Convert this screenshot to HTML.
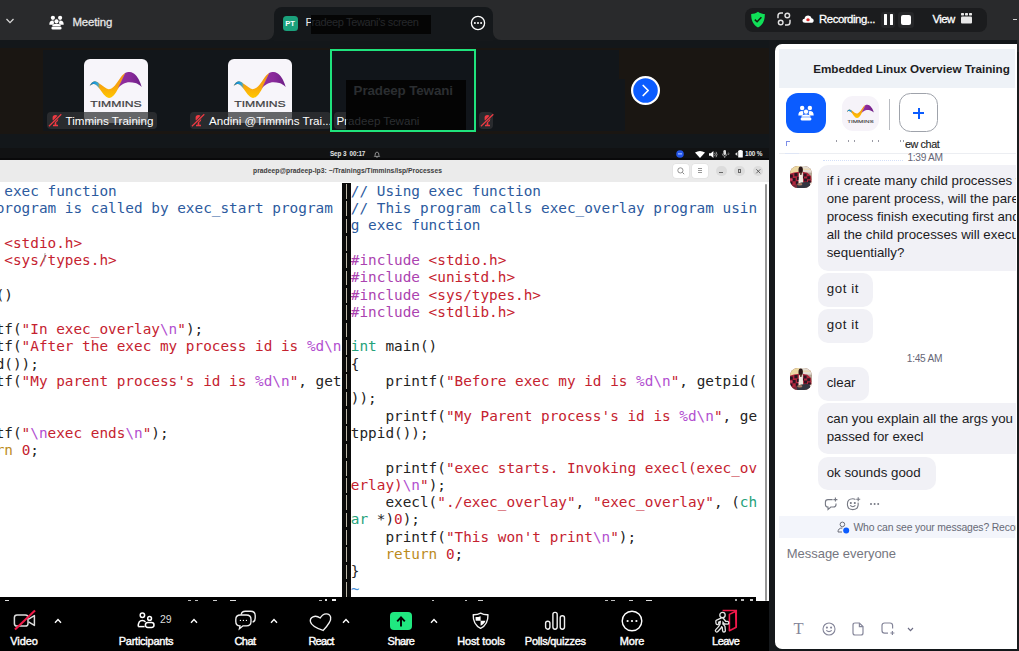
<!DOCTYPE html>
<html><head><meta charset="utf-8"><title>Meeting</title>
<style>
*{box-sizing:border-box;margin:0;padding:0}
html,body{width:1019px;height:651px;overflow:hidden;background:#13171a;font-family:"Liberation Sans",sans-serif}
.abs{position:absolute}
svg{position:absolute;overflow:visible}
#topbar{left:0;top:0;width:1019px;height:40.4px;background:#292a2c}
#tab{left:274px;top:6.7px;width:219px;height:34.3px;background:#15181b;border-radius:8px 8px 0 0}
.tabc{width:8px;height:8px;top:32.4px;background:#15181b}
.tabc i{position:absolute;left:0;top:0;width:8px;height:8px;background:#292a2c;display:block}
#stripL{left:0;top:47.5px;width:768.5px;height:86px;background:#1a1612}
#stripM{left:43.3px;top:49.7px;width:576px;height:81.5px;background:#12161a}
#stripR{left:768.5px;top:40.4px;width:7px;height:611px;background:#15181b}
.logo{background:#f7f5fa;border-radius:6px;width:64px;height:64px;top:59px}
.lbl{top:112px;height:17px;background:rgba(50,51,54,.74);border-radius:4px;color:#fff;font-size:11.6px;line-height:17px;white-space:nowrap;padding-left:19px;overflow:hidden}
#ubar{left:0;top:147.7px;width:768.5px;height:12.5px;background:#111213;border-bottom:2.3px solid #09090a}
#thead{left:0;top:160.2px;width:768.5px;height:21.5px;background:#ebebeb}
#term{left:0;top:181.5px;width:768.5px;height:419.6px;background:#fff;overflow:hidden}
.code{font-family:"DejaVu Sans Mono","Liberation Mono",monospace;font-size:14.37px;line-height:17.29px;white-space:pre;color:#242424}
.c{color:#2c5a9e}.s{color:#c5222f}.p{color:#ab42b0}.e{color:#b24fd0}.t{color:#25a27a}.k{color:#bb8a1c}.b{color:#4a90d9}
#tool{left:0;top:601px;width:768.5px;height:50px;background:#000}
#chat{left:774.5px;top:43.75px;width:242.1px;height:604.75px;background:#fff;border-radius:7px 0 0 7px;overflow:hidden}
#chat>.in{position:absolute;left:.5px;top:.25px;width:240.6px;height:604.5px;overflow:hidden}
.tl{color:#fff;font-size:11px;-webkit-text-stroke:.4px #fff;letter-spacing:-.12px;text-align:center;width:90px;top:635px;line-height:13px;white-space:nowrap}
.bub{background:#f1f1f6;border-radius:10px;font-size:13.3px;color:#1c1c1e;line-height:18.1px;white-space:nowrap;padding:7px 0 0 8.5px;left:43.2px}
.ts{font-size:10.2px;color:#666676;white-space:nowrap;letter-spacing:-.28px}
.av{left:14.9px;width:22px;height:22px;border-radius:8px;overflow:hidden;background:#8a5a48}
</style></head><body>

<div id="topbar" class="abs"></div>
<div id="tab" class="abs"></div>
<div class="abs tabc" style="left:266px"><i style="border-radius:0 0 8px 0"></i></div>
<div class="abs tabc" style="left:493px"><i style="border-radius:0 0 0 8px"></i></div>
<svg style="left:5px;top:17px" width="10" height="8" viewBox="0 0 10 8"><path d="M1.5 2 L5 5.6 L8.5 2" fill="none" stroke="#d8d8d8" stroke-width="1.3"/></svg>
<svg style="left:49.2px;top:14.7px" width="15" height="15" viewBox="0 0 15 15" fill="#fff"><circle cx="3.9" cy="2.8" r="2.1"/><circle cx="11.1" cy="2.8" r="2.1"/><path d="M.3 9.8 Q.3 5.6 3.9 5.6 Q5.2 5.6 5.8 6.2 L4.2 9.8Z"/><path d="M14.7 9.8 Q14.7 5.6 11.1 5.6 Q9.8 5.6 9.2 6.2 L10.8 9.8Z"/><circle cx="7.5" cy="6.3" r="2.5" stroke="#292a2c" stroke-width=".8"/><path d="M3.2 11 Q3.4 8.8 7.5 8.8 Q11.6 8.8 11.8 11Z"/><rect x="2.4" y="11.5" width="10.2" height="3.1" rx="1.55"/></svg>
<div class="abs" style="left:72.5px;top:15.4px;color:#e6e6e6;font-size:11.4px;line-height:14px;-webkit-text-stroke:.3px #e6e6e6;letter-spacing:-.12px">Meeting</div>
<div class="abs" style="left:282.5px;top:15.5px;width:15px;height:15px;border-radius:3.5px;background:#1ba17c;color:#fff;font-size:7.6px;font-weight:bold;line-height:15px;text-align:center;letter-spacing:-.2px">PT</div>
<div class="abs" style="left:305.5px;top:15px;color:#e8e8e8;font-size:11.4px;line-height:14px;white-space:nowrap">P</div>
<div class="abs" style="left:311px;top:15px;width:119.5px;height:19px;background:#050505;color:#25282b;font-size:11px;line-height:14px;white-space:nowrap;padding-left:.5px;letter-spacing:-.36px">radeep Tewani's screen</div>
<svg style="left:470px;top:15px" width="16" height="16" viewBox="0 0 16 16"><circle cx="8" cy="8" r="6.6" fill="none" stroke="#fff" stroke-width="1.3"/><circle cx="4.9" cy="8" r="1" fill="#fff"/><circle cx="8" cy="8" r="1" fill="#fff"/><circle cx="11.1" cy="8" r="1" fill="#fff"/></svg>
<div class="abs" style="left:745px;top:8px;width:242px;height:24px;border-radius:8px;background:#1b1c1e"></div>
<svg style="left:750px;top:11px" width="16" height="17" viewBox="0 0 16 17"><path d="M8 .8 C10 2.300000000000000 12.5 3 14.8 3 C15 9 13 14 8 16.400000000000002 C3 14 1 9 1.2 3 C3.5 3 6 2.3 8 .8Z" fill="#10e058"/><path d="M4.8 8.6 L7.1 10.8 L11.4 6.3" fill="none" stroke="#10210f" stroke-width="1.5"/></svg>
<svg style="left:777px;top:12.3px" width="14" height="14" viewBox="0 0 14 14" fill="none" stroke="#e2e2e2" stroke-width="1.45"><path d="M1 6.2 V3.8 Q1 1 3.8 1 H6"/><path d="M13 7.8 V10.2 Q13 13 10.2 13 H8"/><circle cx="10.3" cy="3.5" r="2.3"/><circle cx="3.7" cy="10.5" r="2.3"/></svg>
<svg style="left:802px;top:15px" width="12" height="8.2" viewBox="0 0 12 9" preserveAspectRatio="none"><path d="M3 8.6 Q.4 8.6 .4 6.3 Q.4 4.300000000000001 2.5 4.1 Q3 .6 6.2 .6 Q9 .6 9.6 3.5 Q11.700000000000001 3.8 11.7 6 Q11.7 8.6 9 8.6Z" fill="#fff"/><circle cx="6" cy="5.300000000000001" r="1.7" fill="#e02828"/></svg>
<div class="abs" style="left:819px;top:12px;color:#fff;font-size:11.4px;line-height:14px;-webkit-text-stroke:.3px #fff;letter-spacing:-.46px;white-space:nowrap">Recording...</div>
<div class="abs" style="left:881px;top:12.2px;width:14px;height:15.4px;border-radius:3px;background:#262729"></div><div class="abs" style="left:897.6px;top:12.2px;width:16.4px;height:15.4px;border-radius:3px;background:#262729"></div>
<div class="abs" style="left:884px;top:14px;width:3px;height:11px;background:#fff;border-radius:.5px"></div>
<div class="abs" style="left:889.5px;top:14px;width:3px;height:11px;background:#fff;border-radius:.5px"></div>
<div class="abs" style="left:901px;top:14.5px;width:10px;height:10px;background:#fff;border-radius:2px"></div>
<div class="abs" style="left:932.5px;top:12px;color:#fff;font-size:11.4px;line-height:14px;-webkit-text-stroke:.3px #fff;letter-spacing:-.6px">View</div>
<svg style="left:961px;top:13px" width="11" height="11" viewBox="0 0 11 11" fill="#e8e8e8"><rect x="0" y="0" width="3" height="2.400000000000000" rx=".6"/><rect x="4" y="0" width="3" height="2.4" rx=".6"/><rect x="8" y="0" width="3" height="2.4" rx=".6"/><rect x="0" y="3.4" width="11" height="7.2" rx="1"/></svg>
<div class="abs" style="left:1013px;top:18.5px;width:4px;height:1.4px;background:#ccc"></div>

<div id="stripL" class="abs"></div><div id="stripM" class="abs"></div><div id="stripR" class="abs"></div>
<div class="abs" style="left:43.3px;top:79px;width:581.7px;height:52.2px;background:#12161a"></div>
<div class="abs logo" style="left:84px"></div><svg style="left:84px;top:59px" width="64" height="64" viewBox="0 0 64 64">
<defs><linearGradient id="g1o" x1="0" y1="0" x2="0" y2="1"><stop offset="0" stop-color="#f39016"/><stop offset=".55" stop-color="#f8a60c"/><stop offset="1" stop-color="#ffc800"/></linearGradient>
<linearGradient id="g1p" x1="0" x2="1"><stop offset="0" stop-color="#93309f"/><stop offset=".5" stop-color="#8a2a9b"/><stop offset="1" stop-color="#6c1f86"/></linearGradient>
<linearGradient id="g1b" x1="0" x2="1"><stop offset="0" stop-color="#0f6fb8"/><stop offset=".5" stop-color="#1f9edc"/><stop offset=".74" stop-color="#2fa6dc" stop-opacity=".9"/><stop offset=".92" stop-color="#6aa8a0" stop-opacity="0"/><stop offset="1" stop-color="#f59b14" stop-opacity="0"/></linearGradient></defs>
<path d="M5.6 27.2 C6.8 24.2 8.8 22 11 22.2 C15 23 19 28.3 24.6 30.3 C29 30.3 33 24 36.6 18.6 C38.5 16 40 14.6 41.6 13.8 L34.2 29.4 C31.5 34.5 28.5 38.9 25 38.9 C21 38.9 18 32.5 14.4 28.3 C13 26.6 11.5 25.2 9.8 25 C8 24.9 6.8 25.9 5.6 27.2Z" fill="url(#g1o)"/>
<path d="M5.6 27.2 C6.8 24.2 8.8 22 11 22.2 C13 22.6 15 24 17 26 L17 31.4 C16 30.2 15.2 29.2 14.4 28.3 C13 26.6 11.5 25.2 9.8 25 C8 24.9 6.8 25.9 5.6 27.2Z" fill="url(#g1b)"/>
<path d="M41.2 14 C43 13 44.5 12.9 45.8 13.05 C48 13.3 50 14.5 51.3 15.8 C53 17.6 54.3 19.5 55 20.9 C56.2 23.2 57 25.5 57.7 28 C55.5 26 53.5 24.8 51.3 24.1 C49 23.3 46.5 23 43.9 23.2 C41.5 23.6 39.5 24.6 37.5 26 C36 27 35 28 33.8 29.6Z" fill="url(#g1p)"/>
<text x="32" y="47.7" text-anchor="middle" font-family="Liberation Sans,sans-serif" font-size="8.4" fill="#3e3e41" textLength="51.4" lengthAdjust="spacingAndGlyphs" stroke="#3e3e41" stroke-width=".2">TIMMINS</text></svg>
<div class="abs logo" style="left:228px"></div><svg style="left:228px;top:59px" width="64" height="64" viewBox="0 0 64 64">
<defs><linearGradient id="g2o" x1="0" y1="0" x2="0" y2="1"><stop offset="0" stop-color="#f39016"/><stop offset=".55" stop-color="#f8a60c"/><stop offset="1" stop-color="#ffc800"/></linearGradient>
<linearGradient id="g2p" x1="0" x2="1"><stop offset="0" stop-color="#93309f"/><stop offset=".5" stop-color="#8a2a9b"/><stop offset="1" stop-color="#6c1f86"/></linearGradient>
<linearGradient id="g2b" x1="0" x2="1"><stop offset="0" stop-color="#0f6fb8"/><stop offset=".5" stop-color="#1f9edc"/><stop offset=".74" stop-color="#2fa6dc" stop-opacity=".9"/><stop offset=".92" stop-color="#6aa8a0" stop-opacity="0"/><stop offset="1" stop-color="#f59b14" stop-opacity="0"/></linearGradient></defs>
<path d="M5.6 27.2 C6.8 24.2 8.8 22 11 22.2 C15 23 19 28.3 24.6 30.3 C29 30.3 33 24 36.6 18.6 C38.5 16 40 14.6 41.6 13.8 L34.2 29.4 C31.5 34.5 28.5 38.9 25 38.9 C21 38.9 18 32.5 14.4 28.3 C13 26.6 11.5 25.2 9.8 25 C8 24.9 6.8 25.9 5.6 27.2Z" fill="url(#g2o)"/>
<path d="M5.6 27.2 C6.8 24.2 8.8 22 11 22.2 C13 22.6 15 24 17 26 L17 31.4 C16 30.2 15.2 29.2 14.4 28.3 C13 26.6 11.5 25.2 9.8 25 C8 24.9 6.8 25.9 5.6 27.2Z" fill="url(#g2b)"/>
<path d="M41.2 14 C43 13 44.5 12.9 45.8 13.05 C48 13.3 50 14.5 51.3 15.8 C53 17.6 54.3 19.5 55 20.9 C56.2 23.2 57 25.5 57.7 28 C55.5 26 53.5 24.8 51.3 24.1 C49 23.3 46.5 23 43.9 23.2 C41.5 23.6 39.5 24.6 37.5 26 C36 27 35 28 33.8 29.6Z" fill="url(#g2p)"/>
<text x="32" y="47.7" text-anchor="middle" font-family="Liberation Sans,sans-serif" font-size="8.4" fill="#3e3e41" textLength="51.4" lengthAdjust="spacingAndGlyphs" stroke="#3e3e41" stroke-width=".2">TIMMINS</text></svg>
<div class="abs lbl" style="left:46.5px;width:110.5px">Timmins Training</div><svg style="left:47.5px;top:114px" width="14" height="13" viewBox="0 0 14 13"><path d="M4.6 3.6 Q4.6 1 7.4 1 Q10.2 1 10.2 3.6 V5.4 Q10.2 7.8 8.3 8 V10.8 H10 V12.2 H5 V10.8 H6.600000000000001 V8 Q4.6 7.800000000000001 4.6 5.4Z" fill="#ee3a43"/><path d="M12.9 .2 L1.2 12.300000000000001" stroke="#2a2c2e" stroke-width="2.6"/><path d="M13.3 .2 L.9 12.2" stroke="#ee3a43" stroke-width="1.2"/></svg>
<div class="abs lbl" style="left:190px;width:141px">Andini @Timmins Trai...</div><svg style="left:191px;top:114px" width="14" height="13" viewBox="0 0 14 13"><path d="M4.6 3.6 Q4.6 1 7.4 1 Q10.2 1 10.2 3.6 V5.4 Q10.2 7.8 8.3 8 V10.8 H10 V12.2 H5 V10.8 H6.600000000000001 V8 Q4.6 7.800000000000001 4.6 5.4Z" fill="#ee3a43"/><path d="M12.9 .2 L1.2 12.300000000000001" stroke="#2a2c2e" stroke-width="2.6"/><path d="M13.3 .2 L.9 12.2" stroke="#ee3a43" stroke-width="1.2"/></svg>
<div class="abs" style="left:330px;top:49px;width:145.8px;height:82.6px;background:#11151a;border:2px solid #1fe27d"></div>
<div class="abs lbl" style="left:334px;width:88px;padding-left:2.5px">Pradeep Tewani</div>
<div class="abs" style="left:346.2px;top:80px;width:119.5px;height:50px;background:#040404"></div>
<div class="abs" style="left:343.5px;top:83px;width:119.5px;text-align:center;color:#2b2e31;font-weight:bold;font-size:13.4px;line-height:16px;white-space:nowrap;letter-spacing:-.12px">Pradeep Tewani</div>
<div class="abs" style="left:346.4px;top:112px;color:#2c2f32;font-size:11.6px;line-height:17px;white-space:nowrap;width:80px;overflow:hidden;text-indent:-9.9px">Pradeep Tewani</div>
<div class="abs lbl" style="left:479px;width:13.5px;padding:0"></div><svg style="left:479.5px;top:114px" width="14" height="13" viewBox="0 0 14 13"><path d="M4.6 3.6 Q4.6 1 7.4 1 Q10.2 1 10.2 3.6 V5.4 Q10.2 7.8 8.3 8 V10.8 H10 V12.2 H5 V10.8 H6.600000000000001 V8 Q4.6 7.800000000000001 4.6 5.4Z" fill="#ee3a43"/><path d="M12.9 .2 L1.2 12.300000000000001" stroke="#2a2c2e" stroke-width="2.6"/><path d="M13.3 .2 L.9 12.2" stroke="#ee3a43" stroke-width="1.2"/></svg>
<svg style="left:631px;top:76px" width="29" height="29" viewBox="0 0 29 29"><circle cx="14.5" cy="14.5" r="13.4" fill="#0b5cff" stroke="#fff" stroke-width="2.2"/><path d="M12.2 9.5 L17.2 14.5 L12.2 19.5" fill="none" stroke="#fff" stroke-width="1.7" stroke-linecap="round" stroke-linejoin="round"/></svg>

<div id="ubar" class="abs"></div>
<div class="abs" style="left:330px;top:150.2px;color:#e4e4e4;font-size:6.3px;line-height:8px;font-weight:bold;white-space:nowrap;letter-spacing:-.1px">Sep 3&nbsp; 00:17</div>
<svg style="left:374.3px;top:150.7px" width="6" height="7" viewBox="0 0 6 7"><path d="M1 4.6 Q1 1 3 1 Q5 1 5 4.6 L5.6 5.4 H.4Z M2.3 6.2 H3.7" fill="none" stroke="#aaa" stroke-width=".8"/></svg>
<svg style="left:676px;top:150px" width="8" height="8" viewBox="0 0 8 8"><circle cx="4" cy="4" r="3.8" fill="#2456e8"/><rect x="2" y="3.2" width="4" height="1.3" fill="#9ab4ff"/></svg>
<svg style="left:695px;top:150.5px" width="10" height="7" viewBox="0 0 10 7"><path d="M0 1.6 Q5 -1.4 10 1.6 L5 7Z" fill="#fff"/></svg>
<svg style="left:709px;top:150.5px" width="9" height="7" viewBox="0 0 9 7"><path d="M0 2.300000000000000 H1.8 L4.4 0 V7 L1.8 4.7 H0Z" fill="#fff"/><path d="M5.6 1.8 Q7 3.5 5.6 5.2 M7 .8 Q9 3.5 7 6.2" fill="none" stroke="#bbb" stroke-width=".8"/></svg>
<svg style="left:722px;top:150px" width="9" height="8" viewBox="0 0 9 8"><rect x="1.4" y="0" width="2.6" height="5" rx="1.3" fill="#ddd"/><path d="M.3 3.6 Q.3 6.2 2.7 6.2 Q5.1 6.2 5.1 3.6 M2.7 6.2 V8" fill="none" stroke="#bbb" stroke-width=".7"/><path d="M6.4 2.6 Q7.4 3.8 6.4 5" fill="none" stroke="#999" stroke-width=".8"/></svg>
<svg style="left:735px;top:150px" width="9" height="8" viewBox="0 0 9 8"><path d="M0 4 L2.400000000000000 2 V6Z" fill="#ddd"/><rect x="3.2" y=".6" width="4.6" height="7" rx=".6" fill="#fff"/><rect x="4.4" y="0" width="2.2" height="1" fill="#fff"/></svg>
<div class="abs" style="left:745px;top:150.3px;color:#e4e4e4;font-size:6.4px;line-height:8px;font-weight:bold;white-space:nowrap;letter-spacing:-.15px">100 %</div>
<div id="thead" class="abs"></div>
<div class="abs" style="left:247.5px;top:166.7px;width:200px;text-align:center;color:#3c3c3c;font-size:6.75px;line-height:8px;font-weight:bold;white-space:nowrap;letter-spacing:.02px">pradeep@pradeep-lp3: ~/Trainings/Timmins/lsp/Processes</div>
<div class="abs" style="left:673px;top:163.5px;width:15.5px;height:14.5px;background:#fff;border-radius:3px;box-shadow:0 0 0 .5px #ddd"></div>
<svg style="left:677px;top:167px" width="8" height="8" viewBox="0 0 8 8"><circle cx="3.4" cy="3.4" r="2.6" fill="none" stroke="#777" stroke-width=".8"/><path d="M5.4 5.4 L7.2 7.2" stroke="#777" stroke-width=".9"/></svg>
<div class="abs" style="left:692px;top:163.5px;width:15.5px;height:14.5px;background:#fff;border-radius:3px;box-shadow:0 0 0 .5px #ddd"></div>
<div class="abs" style="left:697.5px;top:168px;width:4.5px;height:5px;border-top:1px solid #999;border-bottom:1px solid #999"><i style="display:block;margin-top:1px;height:1px;background:#999"></i></div>
<div class="abs" style="left:716px;top:165.8px;width:10.6px;height:10.6px;border-radius:6px;background:#dcdcdc"></div>
<div class="abs" style="left:719.2px;top:171.6px;width:4px;height:.9px;background:#666"></div>
<div class="abs" style="left:734.3px;top:165.8px;width:10.6px;height:10.6px;border-radius:6px;background:#dcdcdc"></div>
<div class="abs" style="left:737.8px;top:169.3px;width:3.6px;height:3.8px;border:.8px solid #666"></div>
<div class="abs" style="left:752.6px;top:165.8px;width:10.6px;height:10.6px;border-radius:6px;background:#dcdcdc"></div>
<svg style="left:755.6px;top:168.8px" width="4.6" height="4.6" viewBox="0 0 4.6 4.6"><path d="M.3 .3 L4.3 4.3 M4.3 .3 L.3 4.3" stroke="#555" stroke-width=".9"/></svg>
<div id="term" class="abs">
<div class="abs code" style="left:-73.5px;top:1.3px;width:415.7px;overflow:hidden"><span class="c">// Using exec function</span>
<span class="c">// This program is called by exec_start program</span>

<span class="p">#include </span><span class="s">&lt;stdio.h&gt;</span>
<span class="p">#include </span><span class="s">&lt;sys/types.h&gt;</span>

<span class="t">int</span> main()
{
    printf(<span class="s">"In exec_overlay</span><span class="e">\n</span><span class="s">"</span>);
    printf(<span class="s">"After the exec my process id is </span><span class="e">%d\n</span>
<span class="s">"</span>, getpid());
    printf(<span class="s">"My parent process's id is </span><span class="e">%d\n</span><span class="s">"</span>, get
ppid());

    printf(<span class="s">"</span><span class="e">\n</span><span class="s">exec ends</span><span class="e">\n</span><span class="s">"</span>);
    <span class="k">return</span> <span class="s">0</span>;
}
<span class="b">~</span></div>
<div class="abs code" style="left:350.8px;top:1.3px"><span class="c">// Using exec function</span>
<span class="c">// This program calls exec_overlay program usin</span>
<span class="c">g exec function</span>

<span class="p">#include </span><span class="s">&lt;stdio.h&gt;</span>
<span class="p">#include </span><span class="s">&lt;unistd.h&gt;</span>
<span class="p">#include </span><span class="s">&lt;sys/types.h&gt;</span>
<span class="p">#include </span><span class="s">&lt;stdlib.h&gt;</span>

<span class="t">int</span> main()
{
    printf(<span class="s">"Before exec my id is </span><span class="e">%d\n</span><span class="s">"</span>, getpid(
));
    printf(<span class="s">"My Parent process's id is </span><span class="e">%d\n</span><span class="s">"</span>, ge
tppid());

    printf(<span class="s">"exec starts. Invoking execl(exec_ov</span>
<span class="s">erlay)</span><span class="e">\n</span><span class="s">"</span>);
    execl(<span class="s">"./exec_overlay"</span>, <span class="s">"exec_overlay"</span>, (<span class="t">ch</span>
<span class="t">ar</span> *)<span class="s">0</span>);
    printf(<span class="s">"This won't print</span><span class="e">\n</span><span class="s">"</span>);
    <span class="k">return</span> <span class="s">0</span>;
}
<span class="b">~</span></div>

<div class="abs" style="left:342.2px;top:1px;width:8.6px;height:416px;background:#0a0a0a"></div>
<div class="abs" style="left:345.6px;top:1.3px;width:1.9px;height:414px;background:repeating-linear-gradient(to bottom,#0a0a0a 0,#0a0a0a 1.2px,#bdb7a8 1.2px,#bdb7a8 15.9px,#0a0a0a 15.9px,#0a0a0a 17.29px)"></div>
<div class="abs" style="left:0;top:415.2px;width:756.4px;height:5px;background:#000"></div>
<div class="abs" style="left:44.2px;top:71.6px;width:1.3px;height:8.6px;background:#8a8a8a;opacity:.75;transform:skewX(-8deg)"></div>
<div class="abs" style="left:764.7px;top:2px;width:2.4px;height:417.6px;background:#969696;border-radius:1px"></div>
</div>

<div id="tool" class="abs"></div>
<div class="abs" style="left:5px;top:599.6px;width:4px;height:1.3px;background:#ddd"></div>
<div class="abs" style="left:188px;top:599.6px;width:3px;height:1.5px;background:#bbb"></div><div class="abs" style="left:195px;top:599.6px;width:3px;height:1.5px;background:#bbb"></div>
<div class="abs" style="left:213px;top:599.6px;width:4px;height:1.3px;background:#ccc"></div><div class="abs" style="left:230px;top:599.6px;width:6px;height:1.5px;background:#ddd"></div>
<div class="abs" style="left:319px;top:599.6px;width:3px;height:1.5px;background:#bbb"></div><div class="abs" style="left:325px;top:599.4px;width:2.2px;height:1.7px;background:#ddd"></div><div class="abs" style="left:331.5px;top:599.4px;width:4.5px;height:1.7px;background:#eee"></div>
<div class="abs" style="left:432px;top:600px;width:2px;height:1.2px;background:#bbb"></div><div class="abs" style="left:465px;top:599.6px;width:2px;height:1.5px;background:#bbb"></div><div class="abs" style="left:478px;top:599.6px;width:5px;height:1.5px;background:#ccc"></div>
<div class="abs" style="left:605px;top:599.6px;width:3px;height:1.5px;background:#bbb"></div><div class="abs" style="left:611px;top:599.6px;width:4px;height:1.5px;background:#bbb"></div><div class="abs" style="left:629px;top:599.6px;width:4px;height:1.4px;background:#ccc"></div><div class="abs" style="left:646px;top:599.6px;width:6px;height:1.5px;background:#ddd"></div>
<div class="abs" style="left:734.5px;top:599.4px;width:2.5px;height:1.6px;background:#aaa"></div><div class="abs" style="left:741.3px;top:599.4px;width:3px;height:1.6px;background:#bbb"></div><div class="abs" style="left:750px;top:599.4px;width:3.4px;height:1.6px;background:#ccc"></div>
<svg style="left:13px;top:609px" width="24" height="22" viewBox="0 0 24 22"><rect x="1.4" y="6" width="13.6" height="11" rx="2.6" fill="none" stroke="#dcdcdc" stroke-width="1.5"/><path d="M15.6 10.2 L21.4 6.6 V16.4 L15.6 12.8" fill="none" stroke="#dcdcdc" stroke-width="1.5" stroke-linejoin="round"/><path d="M22 1.4 L2 20.6" stroke="#ee1a48" stroke-width="2.1"/></svg>
<div class="abs tl" style="left:-21px">Video</div>
<svg style="left:54px;top:617.5px" width="8" height="6" viewBox="0 0 8 6"><path d="M1 4.8 L4 1.6 L7 4.8" fill="none" stroke="#fff" stroke-width="1.4"/></svg>
<svg style="left:137px;top:612px" width="18" height="17" viewBox="0 0 18 17" fill="none" stroke="#fff" stroke-width="1.5"><circle cx="5.4" cy="3.2" r="2.2"/><circle cx="12.6" cy="6.4" r="1.9"/><path d="M1.2 14.6 Q1.2 8.4 5.2 8.4 Q7.6 8.4 8.4 10"/><path d="M1.2 14.6 H7.6"/><rect x="8.4" y="10.6" width="8.6" height="4.8" rx="2.4"/></svg>
<div class="abs" style="left:160px;top:613px;color:#ddd;font-size:10.5px;line-height:12px">29</div>
<div class="abs tl" style="left:101px;letter-spacing:-.25px">Participants</div>
<svg style="left:190px;top:617.5px" width="8" height="6" viewBox="0 0 8 6"><path d="M1 4.8 L4 1.6 L7 4.8" fill="none" stroke="#fff" stroke-width="1.4"/></svg>
<svg style="left:233.5px;top:610px" width="23" height="22" viewBox="0 0 23 22" fill="none" stroke="#f2f2f2" stroke-width="1.35"><path d="M7.2 4.6 Q7.6 1.2 11.4 1.2 H16.6 Q21.2 1.2 21.2 5.6 V8 Q21.2 11.6 18.6 12.2"/><path d="M6.4 5 H12.4 Q17 5 17 9.4 V11.4 Q17 15.8 12.4 15.8 H9 L5.4 18.8 L6 15.8 Q1.8 15.6 1.8 11.4 V9.4 Q1.8 5 6.4 5Z" fill="#000"/><circle cx="6.4" cy="10.4" r=".65" fill="#fff" stroke="none"/><circle cx="9.4" cy="10.4" r=".65" fill="#fff" stroke="none"/><circle cx="12.4" cy="10.4" r=".65" fill="#fff" stroke="none"/></svg>
<div class="abs tl" style="left:200px;letter-spacing:-.5px">Chat</div>
<svg style="left:270px;top:617.5px" width="8" height="6" viewBox="0 0 8 6"><path d="M1 4.8 L4 1.6 L7 4.8" fill="none" stroke="#fff" stroke-width="1.4"/></svg>
<svg style="left:309.3px;top:611.5px" width="24.2" height="19.8" viewBox="0 0 22 18"><path d="M11 16.6 C5 12.8 1.6 9.6 1.6 6.4 C1.6 2.2 7.2 .6 11 5 C14.8 .6 20.4 2.2 20.4 6.4 C20.4 9.6 17 12.8 11 16.6Z" fill="none" stroke="#f2f2f2" stroke-width="1.25" stroke-linejoin="round" transform="rotate(-13 11 9) translate(0 .4)"/></svg>
<div class="abs tl" style="left:276px;letter-spacing:-.7px">React</div>
<svg style="left:342px;top:617.5px" width="8" height="6" viewBox="0 0 8 6"><path d="M1 4.8 L4 1.6 L7 4.8" fill="none" stroke="#fff" stroke-width="1.4"/></svg>
<div class="abs" style="left:390.3px;top:612.4px;width:21.8px;height:17.2px;border-radius:4px;background:#20e880"></div>
<svg style="left:396px;top:615.5px" width="10" height="11" viewBox="0 0 10 11"><path d="M5 10.4 V2 M1.2 5.4 L5 1.4 L8.8 5.4" fill="none" stroke="#000" stroke-width="1.9"/></svg>
<div class="abs tl" style="left:356px;letter-spacing:-.5px">Share</div>
<svg style="left:430px;top:617.5px" width="8" height="6" viewBox="0 0 8 6"><path d="M1 4.8 L4 1.6 L7 4.8" fill="none" stroke="#fff" stroke-width="1.4"/></svg>
<svg style="left:472.4px;top:612.4px" width="17.2" height="17.4" viewBox="0 0 17 17"><path d="M8.5 1 C10.6 2.2 13.2 2.7 15.8 2.6 C16 8.600000000000001 13.8 13.4 8.5 16 C3.2 13.4 1 8.6 1.2 2.6 C3.8 2.7 6.4 2.2 8.5 1Z" fill="none" stroke="#f2f2f2" stroke-width="1.35" stroke-linejoin="round"/><path d="M8.5 4 V8.6 H3.7 C3.5 7.2 3.5 6 3.5 4.9 C5.300000000000001 4.9 7 4.6 8.5 4Z M8.5 8.6 H13.3 C12.8 10.600000000000001 11.2 12.4 8.5 13.6Z" fill="#fff"/></svg>
<div class="abs tl" style="left:436px">Host tools</div>
<svg style="left:544px;top:609px" width="22" height="22" viewBox="0 0 22 22" fill="none" stroke="#f2f2f2" stroke-width="1.4"><rect x="1.6" y="12.2" width="4.3" height="8" rx="2.1"/><rect x="8.9" y="3.4" width="4.3" height="16.8" rx="2.1"/><rect x="16.2" y="6.8" width="4.3" height="13.4" rx="2.1"/></svg>
<div class="abs tl" style="left:510.3px;letter-spacing:-.25px">Polls/quizzes</div>
<svg style="left:621px;top:609.5px" width="22" height="22" viewBox="0 0 22 22"><circle cx="11" cy="11" r="9.8" fill="none" stroke="#fff" stroke-width="1.4"/><circle cx="6.6" cy="11" r="1.1" fill="#fff"/><circle cx="11" cy="11" r="1.1" fill="#fff"/><circle cx="15.4" cy="11" r="1.1" fill="#fff"/></svg>
<div class="abs tl" style="left:587px">More</div>
<svg style="left:712px;top:608px" width="26" height="24" viewBox="0 0 26 24"><path d="M10.6 2.4 H24.3 V19" fill="none" stroke="#f0184a" stroke-width="1.5"/><path d="M17.4 6.4 L23.7 3.2 L24.2 19.3 L17.4 22.7Z" fill="none" stroke="#f0184a" stroke-width="1.6" stroke-linejoin="round"/>
<g fill="none" stroke-linecap="round" stroke-linejoin="round"><g stroke="#e4e4e4" stroke-width="4.1"><path d="M10 11 L9.4 16.4 M9.600000000000001 11.4 L5.2 13.4 L5.4 15.2 M10.6 11.6 L13 14.6 L15.4 14.8 M9.4 16.4 L7.6 19.6 L4.8 22.6 M9.4 16.4 L11.6 18.8 L12 22.6"/></g><g stroke="#000" stroke-width="1.5"><path d="M10 11 L9.4 16.4 M9.6 11.4 L5.2 13.4 L5.4 15.2 M10.6 11.6 L13 14.6 L15.4 14.8 M9.4 16.4 L7.6 19.6 L4.8 22.6 M9.4 16.4 L11.6 18.8 L12 22.6"/></g></g>
<circle cx="10.5" cy="7" r="2.7" fill="#000" stroke="#e4e4e4" stroke-width="1.3"/></svg>
<div class="abs tl" style="left:680.7px;letter-spacing:-.55px">Leave</div>

<div id="chat" class="abs"><div class="in">
<div class="abs" style="left:4.3px;top:4.5px;width:235.7px;height:39.5px;background:#eef2f7"></div>
<div class="abs" style="left:37px;top:17px;width:199px;text-align:center;font-size:11.7px;font-weight:bold;color:#1d1d22;line-height:15px;white-space:nowrap;letter-spacing:-.05px">Embedded Linux Overview Training</div>
<div class="abs" style="left:11px;top:48.6px;width:40.4px;height:40.6px;border-radius:12px;background:#0b5cff"></div>
<svg style="left:23.2px;top:61px" width="16" height="16" viewBox="0 0 15 15" fill="#fff"><circle cx="3.9" cy="2.8" r="2.1"/><circle cx="11.1" cy="2.8" r="2.1"/><path d="M.3 9.8 Q.3 5.6 3.9 5.6 Q5.2 5.6 5.8 6.2 L4.2 9.8Z"/><path d="M14.7 9.8 Q14.7 5.6 11.1 5.6 Q9.8 5.6 9.2 6.2 L10.8 9.8Z"/><circle cx="7.5" cy="6.3" r="2.5" stroke="#0b5cff" stroke-width=".8"/><path d="M3.2 11 Q3.4 8.8 7.5 8.8 Q11.6 8.8 11.8 11Z"/><rect x="2.4" y="11.5" width="10.2" height="3.1" rx="1.55"/></svg>
<div class="abs" style="left:66.6px;top:51.7px;width:37.2px;height:35.6px;border-radius:11px;background:#f6f3f9"></div>
<svg style="left:68.5px;top:53.5px" width="33" height="33" viewBox="0 0 64 64">
<defs><linearGradient id="g3o" x1="0" y1="0" x2="0" y2="1"><stop offset="0" stop-color="#f39016"/><stop offset=".55" stop-color="#f8a60c"/><stop offset="1" stop-color="#ffc800"/></linearGradient>
<linearGradient id="g3p" x1="0" x2="1"><stop offset="0" stop-color="#93309f"/><stop offset=".5" stop-color="#8a2a9b"/><stop offset="1" stop-color="#6c1f86"/></linearGradient>
<linearGradient id="g3b" x1="0" x2="1"><stop offset="0" stop-color="#0f6fb8"/><stop offset=".5" stop-color="#1f9edc"/><stop offset=".74" stop-color="#2fa6dc" stop-opacity=".9"/><stop offset=".92" stop-color="#6aa8a0" stop-opacity="0"/><stop offset="1" stop-color="#f59b14" stop-opacity="0"/></linearGradient></defs>
<path d="M5.6 27.2 C6.8 24.2 8.8 22 11 22.2 C15 23 19 28.3 24.6 30.3 C29 30.3 33 24 36.6 18.6 C38.5 16 40 14.6 41.6 13.8 L34.2 29.4 C31.5 34.5 28.5 38.9 25 38.9 C21 38.9 18 32.5 14.4 28.3 C13 26.6 11.5 25.2 9.8 25 C8 24.9 6.8 25.9 5.6 27.2Z" fill="url(#g3o)"/>
<path d="M5.6 27.2 C6.8 24.2 8.8 22 11 22.2 C13 22.6 15 24 17 26 L17 31.4 C16 30.2 15.2 29.2 14.4 28.3 C13 26.6 11.5 25.2 9.8 25 C8 24.9 6.8 25.9 5.6 27.2Z" fill="url(#g3b)"/>
<path d="M41.2 14 C43 13 44.5 12.9 45.8 13.05 C48 13.3 50 14.5 51.3 15.8 C53 17.6 54.3 19.5 55 20.9 C56.2 23.2 57 25.5 57.7 28 C55.5 26 53.5 24.8 51.3 24.1 C49 23.3 46.5 23 43.9 23.2 C41.5 23.6 39.5 24.6 37.5 26 C36 27 35 28 33.8 29.6Z" fill="url(#g3p)"/>
<text x="32" y="47.7" text-anchor="middle" font-family="Liberation Sans,sans-serif" font-size="8.4" fill="#3e3e41" textLength="51.4" lengthAdjust="spacingAndGlyphs" stroke="#3e3e41" stroke-width=".2">TIMMINS</text></svg>
<div class="abs" style="left:114px;top:54.7px;width:1.1px;height:31.5px;background:#b9bcc2"></div>
<div class="abs" style="left:124px;top:49.3px;width:39.4px;height:38.4px;border-radius:11.5px;background:#fff;border:1.1px solid #9fa3ab"></div>
<div class="abs" style="left:137.9px;top:68.4px;width:11.4px;height:1.9px;background:#0b5cff"></div>
<div class="abs" style="left:142.65px;top:63.7px;width:1.9px;height:11.4px;background:#0b5cff"></div>
<div class="abs" style="left:122.6px;top:93px;font-size:10.8px;line-height:14px;color:#222;white-space:nowrap;letter-spacing:-.4px;-webkit-text-stroke:.12px #222">New chat</div>
<div class="abs" style="left:4.3px;top:92px;width:125.6px;height:16px;background:#fff"></div><div class="abs" style="left:61.0px;top:96.4px;width:1px;height:1.3px;background:#9a9aa4"></div><div class="abs" style="left:72.7px;top:96.4px;width:1.2px;height:1.3px;background:#9a9aa4"></div><div class="abs" style="left:79.4px;top:96.4px;width:1px;height:1.3px;background:#9a9aa4"></div><div class="abs" style="left:96.5px;top:96.4px;width:1px;height:1.3px;background:#9a9aa4"></div><div class="abs" style="left:102.6px;top:96.4px;width:1.6px;height:1.3px;background:#9a9aa4"></div><div class="abs" style="left:124.6px;top:96.4px;width:1px;height:1.3px;background:#9a9aa4"></div><div class="abs" style="left:128.0px;top:96.4px;width:1.2px;height:1.3px;background:#9a9aa4"></div>
<div class="abs" style="left:11px;top:96.6px;width:4px;height:5px;border-left:1px solid #7e8fe8;border-top:1px solid #7e8fe8"></div>
<div class="abs" style="left:4.3px;top:108.5px;width:237px;height:1px;background:#eceef2"></div>
<div class="abs" style="left:10px;top:108.5px;width:14px;height:1px;background:#dfe6f6"></div>
<div class="abs ts" style="left:132.4px;top:107.6px">1:39 AM</div>
<div class="abs" style="left:48px;top:116.4px;width:80px;height:0;border-top:1px dotted #d3dff8"></div>
<div class="abs av" style="top:121.75px"><svg style="left:0;top:0" width="22" height="22" viewBox="0 0 22 22"><defs><filter id="bla" x="-10%" y="-10%" width="120%" height="120%"><feGaussianBlur stdDeviation=".5"/></filter></defs><g filter="url(#bla)"><rect x="-2" y="-2" width="26" height="26" fill="#e4ddd2"/><rect x="-2" y="-2" width="11.6" height="10" fill="#ecd8a2"/><rect x="12" y="2.6" width="12" height="1.3" fill="#ead8ae"/><rect x="16" y="6.6" width="8" height="7.4" fill="#b4a898"/>
<path d="M-1 8 L4 6.4 L9 5.8 L8.4 19 L5 23 L-1 23Z" fill="#b0263c"/><path d="M12.6 5.8 L17.4 6.8 L21 10 L21.6 16 L17 17.6 L13.2 17Z" fill="#b0263c"/>
<path d="M-.4 8.6 H2.8 V11.8 H-.4Z M4.4 7 H7.6 V10.2 H4.4Z M2.4 12 H5.6 V15.2 H2.4Z M5.8 15.2 H8.6 V18.6 H5.8Z M-.4 15.4 H2.4 V18.6 H-.4Z M13.6 7.4 H16.6 V10.4 H13.6Z M17.2 10.2 H20.2 V13.2 H17.2Z M14 12.4 H17 V15.6 H14Z M18 14.4 H20.8 V16.8 H18Z M7 10.8 H8.8 V14 H7Z M12.8 10.600000000000001 H14 V12.6 H12.8Z" fill="#2a1422"/>
<path d="M-1 12.6 H2.6 V14.6 H-1Z" fill="#d04868"/>
<path d="M9.2 6.4 L12.6 6.4 L13 17.2 L8.6 17.2Z" fill="#f1e9e1"/>
<ellipse cx="10.7" cy="4" rx="2.2" ry="3.4" fill="#2a1916"/><path d="M9.7 6.6 L12 6.6 L11.5 9 L10.2 9Z" fill="#5e3a2c"/>
<path d="M6.6 18 Q12 15.6 19.6 16.2 L21 23 L6 23Z" fill="#30353f"/><ellipse cx="9.8" cy="18.2" rx="2.6" ry="1.2" fill="#a87a64"/><path d="M3 19 L7 18.4 L7 23 L2 23Z" fill="#742a3a"/></g></svg></div>
<div class="abs bub" style="top:121px;width:220px;height:106px">if i create many child processes w<br>one parent process, will the paren<br>process finish executing first and<br>all the child processes will execu<br>sequentially?</div>
<div class="abs bub" style="top:229.2px;width:55px;height:33.8px;letter-spacing:.6px">got it</div>
<div class="abs bub" style="top:264.7px;width:55px;height:34.1px;letter-spacing:.6px;padding-top:7.2px">got it</div>
<div class="abs ts" style="left:131.8px;top:309.4px">1:45 AM</div>
<div class="abs av" style="top:324px"><svg style="left:0;top:0" width="22" height="22" viewBox="0 0 22 22"><defs><filter id="blb" x="-10%" y="-10%" width="120%" height="120%"><feGaussianBlur stdDeviation=".5"/></filter></defs><g filter="url(#blb)"><rect x="-2" y="-2" width="26" height="26" fill="#e4ddd2"/><rect x="-2" y="-2" width="11.6" height="10" fill="#ecd8a2"/><rect x="12" y="2.6" width="12" height="1.3" fill="#ead8ae"/><rect x="16" y="6.6" width="8" height="7.4" fill="#b4a898"/>
<path d="M-1 8 L4 6.4 L9 5.8 L8.4 19 L5 23 L-1 23Z" fill="#b0263c"/><path d="M12.6 5.8 L17.4 6.8 L21 10 L21.6 16 L17 17.6 L13.2 17Z" fill="#b0263c"/>
<path d="M-.4 8.6 H2.8 V11.8 H-.4Z M4.4 7 H7.6 V10.2 H4.4Z M2.4 12 H5.6 V15.2 H2.4Z M5.8 15.2 H8.6 V18.6 H5.8Z M-.4 15.4 H2.4 V18.6 H-.4Z M13.6 7.4 H16.6 V10.4 H13.6Z M17.2 10.2 H20.2 V13.2 H17.2Z M14 12.4 H17 V15.6 H14Z M18 14.4 H20.8 V16.8 H18Z M7 10.8 H8.8 V14 H7Z M12.8 10.600000000000001 H14 V12.6 H12.8Z" fill="#2a1422"/>
<path d="M-1 12.6 H2.6 V14.6 H-1Z" fill="#d04868"/>
<path d="M9.2 6.4 L12.6 6.4 L13 17.2 L8.6 17.2Z" fill="#f1e9e1"/>
<ellipse cx="10.7" cy="4" rx="2.2" ry="3.4" fill="#2a1916"/><path d="M9.7 6.6 L12 6.6 L11.5 9 L10.2 9Z" fill="#5e3a2c"/>
<path d="M6.6 18 Q12 15.6 19.6 16.2 L21 23 L6 23Z" fill="#30353f"/><ellipse cx="9.8" cy="18.2" rx="2.6" ry="1.2" fill="#a87a64"/><path d="M3 19 L7 18.4 L7 23 L2 23Z" fill="#742a3a"/></g></svg></div>
<div class="abs bub" style="top:323px;width:50.6px;height:33.6px">clear</div>
<div class="abs bub" style="top:359.4px;width:220px;height:50.6px">can you explain all the args you<br>passed for execl</div>
<div class="abs bub" style="top:413.2px;width:117.6px;height:33px">ok sounds good</div>
<svg style="left:49px;top:453px" width="15" height="14" viewBox="0 0 15 14" fill="none" stroke="#767984" stroke-width="1.1"><path d="M8.6 2.6 H4 Q1.4 2.6 1.4 5.2 V7.4 Q1.4 10 4 10 V12.6 L6.8 10 H9.4 Q12 10 12 7.4 V6.4"/><path d="M11.4 .6 V4.6 M9.4 2.6 H13.4"/></svg>
<svg style="left:71px;top:453px" width="15" height="14" viewBox="0 0 15 14" fill="none" stroke="#767984" stroke-width="1.1"><path d="M9.4 2.4 Q8.2 1.8 6.8 1.8 Q1.4 1.8 1.4 7.2 Q1.4 12.6 6.8 12.6 Q12.2 12.6 12.2 7.2 Q12.2 6.4 12 5.6"/><circle cx="4.8" cy="6" r=".5" fill="#767984"/><circle cx="8.8" cy="6" r=".5" fill="#767984"/><path d="M4.2 8.4 Q6.8 11 9.4 8.4"/><path d="M12.2 .2 V4.2 M10.2 2.2 H14.2"/></svg>
<div class="abs" style="left:94.6px;top:459.4px;width:2px;height:2px;border-radius:1px;background:#767984;box-shadow:3.6px 0 0 #767984,7.2px 0 0 #767984"></div>
<div class="abs" style="left:4.3px;top:471.6px;width:235.7px;height:22px;background:#f3f5fb"></div>
<svg style="left:62px;top:476.6px" width="14" height="13" viewBox="0 0 14 13"><circle cx="5.4" cy="3.4" r="2.3" fill="none" stroke="#6a6d78" stroke-width="1"/><path d="M1 11 Q1 7 5.4 7" fill="none" stroke="#6a6d78" stroke-width="1"/><path d="M1 11 H5" stroke="#6a6d78" stroke-width="1"/><circle cx="9.2" cy="9.4" r="3" fill="#0b5cff"/></svg>
<div class="abs" style="left:78.4px;top:477.3px;font-size:10.4px;line-height:13px;color:#676a76;white-space:nowrap;letter-spacing:-.16px">Who can see your messages? Recor</div>
<div class="abs" style="left:11.8px;top:502px;font-size:13px;line-height:16px;color:#75767f;white-space:nowrap;letter-spacing:-.04px">Message everyone</div>
<div class="abs" style="left:18.4px;top:575.5px;font-family:'Liberation Serif',serif;font-size:16.5px;line-height:18px;color:#85869a">T</div>
<svg style="left:47px;top:578px" width="14" height="14" viewBox="0 0 14 14" fill="none" stroke="#85869a" stroke-width="1.1"><circle cx="7" cy="7" r="6"/><circle cx="4.9" cy="5.6" r=".5" fill="#85869a"/><circle cx="9.1" cy="5.6" r=".5" fill="#85869a"/><path d="M4.3 8.4 Q7 11 9.7 8.4"/></svg>
<svg style="left:77px;top:578px" width="12" height="14" viewBox="0 0 12 14" fill="none" stroke="#85869a" stroke-width="1.2"><path d="M3 1 H7.4 L11 4.6 V11 Q11 13 9 13 H3 Q1 13 1 11 V3 Q1 1 3 1Z"/><path d="M7.4 1 V4.6 H11"/></svg>
<svg style="left:106px;top:578px" width="15" height="14" viewBox="0 0 15 14" fill="none" stroke="#85869a" stroke-width="1.2"><path d="M11.6 6.6 V3.6 Q11.6 1 9 1 H3.6 Q1 1 1 3.6 V8.6 Q1 11.200000000000001 3.6 11.2 H7"/><path d="M11.4 9 V13 M9.4 11 H13.4"/></svg>
<svg style="left:131.5px;top:582.5px" width="7" height="5" viewBox="0 0 7 5"><path d="M1 1 L3.5 3.6 L6 1" fill="none" stroke="#6c6c84" stroke-width="1.2"/></svg>
</div></div>
<div class="abs" style="left:1016.6px;top:51.5px;width:3px;height:600px;background:#1b1c1e"></div><div class="abs" style="left:1016.6px;top:40px;width:3px;height:11.5px;background:#28292b"></div>

</body></html>
